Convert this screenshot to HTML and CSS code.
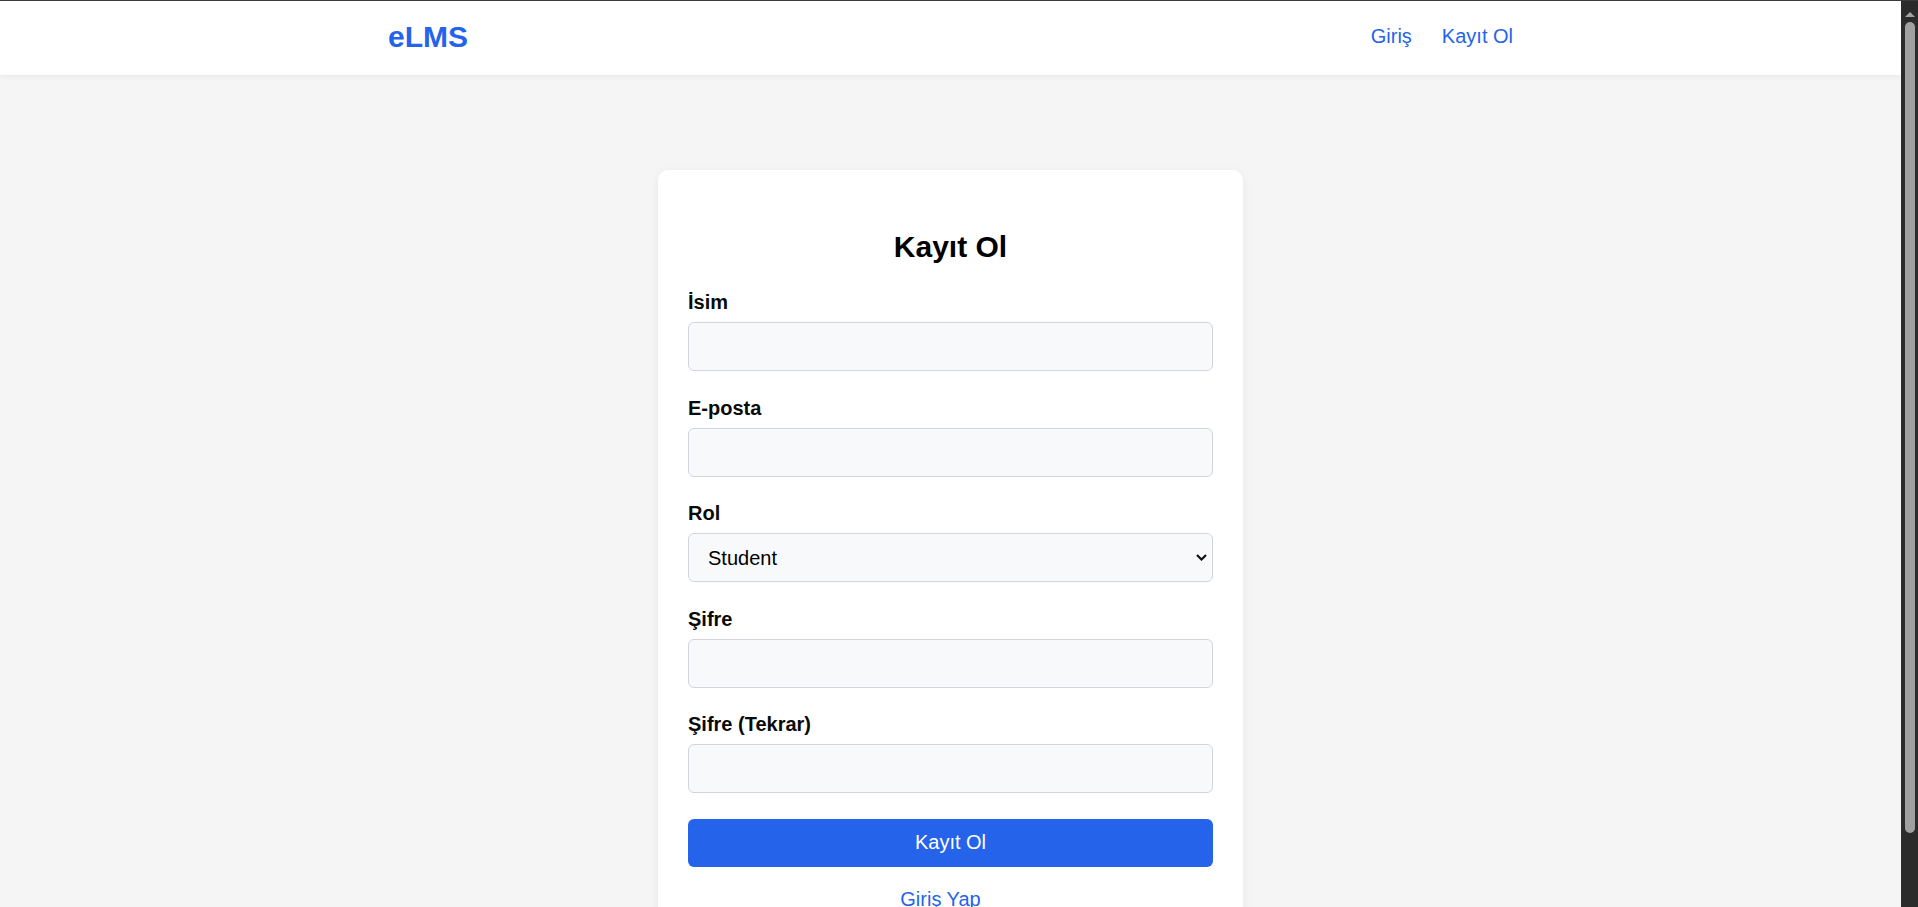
FILE: index.html
```html
<!DOCTYPE html>
<html lang="tr">
<head>
<meta charset="utf-8">
<title>eLMS - Kayıt Ol</title>
<link rel="stylesheet" href="styles.css">
</head>
<body>
<div class="window">
  <div class="viewport">
    <header class="topbar">
      <div class="nav-inner">
        <a class="logo" href="#">eLMS</a>
        <nav class="nav-links">
          <a href="#">Giriş</a>
          <a href="#">Kayıt Ol</a>
        </nav>
      </div>
    </header>
    <main class="main">
      <div class="card">
        <h2 class="card-title">Kayıt Ol</h2>
        <form class="form">
          <div class="field">
            <label for="name">İsim</label>
            <input class="input" id="name" type="text">
          </div>
          <div class="field">
            <label for="email">E-posta</label>
            <input class="input" id="email" type="email">
          </div>
          <div class="field">
            <label for="role">Rol</label>
            <div class="select-wrap">
              <select class="input select" id="role">
                <option>Student</option>
                <option>Instructor</option>
              </select>
              <svg class="chevron" width="11" height="7" viewBox="0 0 11 7"><path d="M1 1 L5.5 5.5 L10 1" fill="none" stroke="#111" stroke-width="2.2"/></svg>
            </div>
          </div>
          <div class="field">
            <label for="pw">Şifre</label>
            <input class="input" id="pw" type="password">
          </div>
          <div class="field">
            <label for="pw2">Şifre (Tekrar)</label>
            <input class="input" id="pw2" type="password">
          </div>
          <button class="btn" type="button">Kayıt Ol</button>
        </form>
        <p class="alt"><a href="#">Giriş Yap</a></p>
      </div>
    </main>
  </div>
  <div class="scrollbar">
    <div class="sb-arrow"></div>
    <div class="sb-thumb"></div>
  </div>
</div>
</body>
</html>
```

FILE: styles.css
```css
html, body {
  margin: 0;
  padding: 0;
  height: 100%;
  overflow: hidden;
}

body {
  font-family: "Liberation Sans", Arial, sans-serif;
  background: #f5f5f5;
  color: #111;
}

.window {
  display: flex;
  height: 100vh;
  box-sizing: border-box;
  border-top: 1px solid #3b3b3b;
  overflow: hidden;
}

.viewport {
  flex: 1;
  min-width: 0;
  overflow: hidden;
  background: #f5f5f5;
}

.topbar {
  position: relative;
  z-index: 1;
  height: 74px;
  box-sizing: border-box;
  padding-bottom: 3px;
  display: flex;
  align-items: center;
  background: #fff;
  box-shadow: 0 2px 5px rgba(0, 0, 0, 0.05);
}

.nav-inner {
  width: 1125px;
  margin: 0 auto;
  display: flex;
  justify-content: space-between;
  align-items: center;
}

.logo {
  font-size: 30px;
  line-height: 34px;
  font-weight: bold;
  color: #2563eb;
  text-decoration: none;
}

.nav-links {
  display: flex;
  gap: 30px;
}

.nav-links a {
  font-size: 20px;
  line-height: 23px;
  color: #2563eb;
  text-decoration: none;
}

.main {
  padding-top: 95px;
}

.card {
  width: 585px;
  margin: 0 auto;
  box-sizing: border-box;
  padding: 30px;
  background: #fff;
  border-radius: 10px;
  box-shadow: 0 2px 10px rgba(0, 0, 0, 0.06);
}

.card-title {
  margin: 30px 0 27px;
  font-size: 30px;
  line-height: 34px;
  font-weight: bold;
  text-align: center;
  color: #000;
}

.form {
  margin: 0;
}

.field {
  margin-bottom: 25.5px;
}

.field label {
  display: block;
  font-size: 20px;
  line-height: 23px;
  font-weight: bold;
  color: #0a0a0a;
  margin-bottom: 8px;
}

.input {
  display: block;
  width: 100%;
  height: 49px;
  box-sizing: border-box;
  margin: 0;
  padding: 0 15px;
  border: 1px solid #d1d5db;
  border-radius: 6px;
  background: #f8f9fa;
  font-family: "Liberation Sans", Arial, sans-serif;
  font-size: 20px;
  color: #000;
  outline: none;
}

.select-wrap {
  position: relative;
}

.select {
  -webkit-appearance: none;
  appearance: none;
  padding-left: 19px;
}

.chevron {
  position: absolute;
  right: 6px;
  top: 21px;
  pointer-events: none;
}

.btn {
  display: block;
  width: 100%;
  height: 48px;
  margin-top: 1px;
  border: 0;
  border-radius: 6px;
  background: #2563eb;
  color: #fff;
  font-family: "Liberation Sans", Arial, sans-serif;
  font-size: 20px;
}

.alt {
  margin: 21px 0 0;
  padding-right: 20px;
  text-align: center;
  font-size: 20px;
  line-height: 23px;
}

.alt a {
  color: #2563eb;
  text-decoration: none;
}

.scrollbar {
  position: relative;
  width: 17px;
  flex: none;
  background: #2b2b2b;
}

.sb-arrow {
  position: absolute;
  top: 11px;
  left: 4px;
  width: 0;
  height: 0;
  border-left: 5px solid transparent;
  border-right: 5px solid transparent;
  border-bottom: 5px solid #a3a3a3;
}

.sb-thumb {
  position: absolute;
  top: 21px;
  left: 4px;
  width: 10px;
  height: 811px;
  border-radius: 5px;
  background: #a0a0a0;
}
```
